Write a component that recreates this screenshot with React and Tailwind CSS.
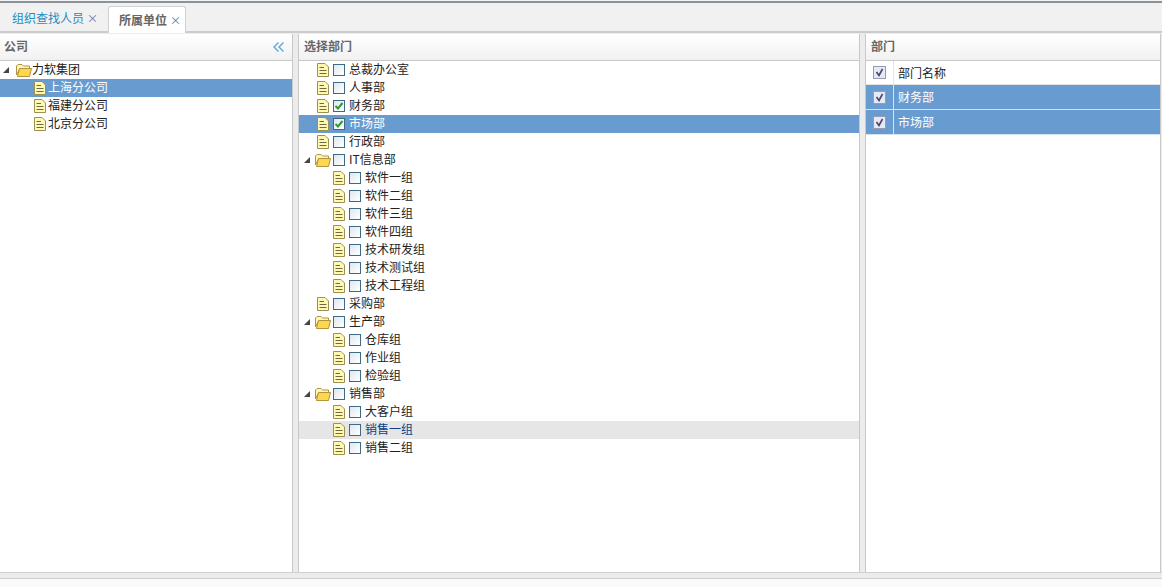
const companies = [
  { name: "力软集团", folder: true, level: 0 },
  { name: "上海分公司", level: 1, selected: true },
  { name: "福建分公司", level: 1 },
  { name: "北京分公司", level: 1 },
];

const departments = [
  { name: "总裁办公室", level: 0 },
  { name: "人事部", level: 0 },
  { name: "财务部", level: 0, checked: true },
  { name: "市场部", level: 0, checked: true, selected: true },
  { name: "行政部", level: 0 },
  { name: "IT信息部", level: 0, folder: true },
  { name: "软件一组", level: 1 },
  { name: "软件二组", level: 1 },
  { name: "软件三组", level: 1 },
  { name: "软件四组", level: 1 },
  { name: "技术研发组", level: 1 },
  { name: "技术测试组", level: 1 },
  { name: "技术工程组", level: 1 },
  { name: "采购部", level: 0 },
  { name: "生产部", level: 0, folder: true },
  { name: "仓库组", level: 1 },
  { name: "作业组", level: 1 },
  { name: "检验组", level: 1 },
  { name: "销售部", level: 0, folder: true },
  { name: "大客户组", level: 1 },
  { name: "销售一组", level: 1, hover: true },
  { name: "销售二组", level: 1 },
];

function FileIcon() {
  return (
    <svg width="12" height="14" viewBox="0 0 12 14" className="shrink-0">
      <path d="M0.5 0.5H8L11.5 4V13.5H0.5Z" fill="#fff9b5" stroke="#9c9050" />
      <path d="M2.5 4.5H7M2.5 7.5H9.5M2.5 10.5H9.5" stroke="#6f6a44" />
    </svg>
  );
}

function FolderIcon() {
  return (
    <svg width="16" height="13" viewBox="0 0 16 13" className="shrink-0">
      <path d="M0.5 11V2L2 0.5H6L7.5 2H13.5V5H3.5L0.5 11Z" fill="#fff6b8" stroke="#b09440" />
      <path d="M1.5 12.5L3.5 4.5H15.5L13.5 12.5Z" fill="#fdd84f" stroke="#b09440" />
    </svg>
  );
}

function Arrow() {
  return (
    <svg width="6" height="6" viewBox="0 0 6 6" className="shrink-0">
      <path d="M6 0V6H0Z" fill="#444" />
    </svg>
  );
}

function TreeCheck({ checked }) {
  return (
    <span className="w-3 h-3 shrink-0 border border-[#3f6a86] bg-gradient-to-br from-[#dfe8ee] to-white flex items-center justify-center">
      {checked && (
        <svg width="10" height="10" viewBox="0 0 10 10">
          <path d="M1.5 5L4 7.5L8.5 2" fill="none" stroke="#2f9a35" strokeWidth="2" />
        </svg>
      )}
    </span>
  );
}

function GridCheck() {
  return (
    <span className="w-[13px] h-[13px] border border-[#9a9ab0] bg-[#e8e8f2] flex items-center justify-center">
      <svg width="11" height="11" viewBox="0 0 11 11">
        <path d="M2.5 5L5 8.5L8.5 2" fill="none" stroke="#45457a" strokeWidth="1.6" />
      </svg>
    </span>
  );
}

function TreeRow({ node, hasCheck, baseIndent }) {
  let rowClass = "text-[#222]";
  if (node.selected) rowClass = "bg-[#689bcf] text-white";
  if (node.hover) rowClass = "bg-[#e6e6e6] text-[#0b3f8a]";
  const indent = baseIndent + node.level * 16;
  return (
    <div className={`h-[18px] flex items-center ${rowClass}`}>
      <div style={{ width: indent }} className="shrink-0" />
      {node.folder ? (
        <div className={`flex items-center shrink-0 ml-[-13px] ${hasCheck ? "w-[27px]" : "w-[29px]"}`}>
          <Arrow />
          <span className={hasCheck ? "ml-[5px]" : "ml-[7px]"}>
            <FolderIcon />
          </span>
        </div>
      ) : (
        <div className="w-[14px] shrink-0">
          <FileIcon />
        </div>
      )}
      {hasCheck && (
        <span className="ml-[2px] mr-1">
          <TreeCheck checked={node.checked} />
        </span>
      )}
      <span className="leading-4 mb-[2px]">{node.name}</span>
    </div>
  );
}

function PanelHeader({ title, bordered, children }) {
  return (
    <div
      className={`h-[27px] shrink-0 pr-1 flex items-center justify-between border-b border-[#c8c8c8] bg-gradient-to-b from-white to-[#f1f1f1] ${
        bordered ? "pl-[5px]" : "pl-1"
      }`}
    >
      <span className="font-bold text-[#666] leading-4 mb-[2px]">{title}</span>
      {children}
    </div>
  );
}

export default function App() {
  return (
    <div
      className="w-[1162px] h-[587px] overflow-hidden flex flex-col bg-[#ececec] text-xs"
      style={{ fontFamily: '"Noto Sans CJK SC", "Liberation Sans", sans-serif' }}
    >
      <div className="h-[3px] shrink-0 bg-[#f4f4f4] border-b-2 border-b-[#8a939c]" />
      <div className="h-[30px] shrink-0 flex items-end pl-1 bg-[#f1f1f1] border-b-2 border-[#cccccc]">
        <div className="h-[26px] w-[104px] flex items-center pl-2 gap-[3px] text-[#1e8bc0]">
          <span>组织查找人员</span>
          <span className="text-[#5577aa] text-[11px]">×</span>
        </div>
        <div className="h-[27px] w-[78px] mb-[-2px] flex items-center pl-[10px] gap-[3px] bg-white border border-b-0 border-[#d2d2d2] rounded-t-[3px] text-[#666] font-bold">
          <span>所属单位</span>
          <span className="text-[#5577aa] text-[11px] font-normal">×</span>
        </div>
      </div>

      <div className="h-[539px] shrink-0 flex pt-px">
        <section className="w-[293px] shrink-0 bg-white flex flex-col border-r border-[#c8c8c8]">
          <PanelHeader title="公司">
            <svg width="12" height="12" viewBox="0 0 12 12" className="mr-[3px]">
              <path d="M5.5 1.5L1 6L5.5 10.5M10.5 1.5L6 6L10.5 10.5" fill="none" stroke="#5aa7dc" strokeWidth="1.4" />
            </svg>
          </PanelHeader>
          <div>
            {companies.map((node) => (
              <TreeRow key={node.name} node={node} baseIndent={node.level === 0 ? 16 : 18} />
            ))}
          </div>
        </section>

        <div className="w-[5px] shrink-0" />

        <section className="w-[562px] shrink-0 bg-white flex flex-col border-x border-[#c8c8c8]">
          <PanelHeader title="选择部门" bordered />
          <div>
            {departments.map((node) => (
              <TreeRow key={node.name} node={node} hasCheck baseIndent={18} />
            ))}
          </div>
        </section>

        <div className="w-[5px] shrink-0" />

        <section className="flex-1 mr-px bg-white flex flex-col border-x border-[#c8c8c8]">
          <PanelHeader title="部门" bordered />
          <div className="h-6 flex items-center border-b border-[#e4e4e4]">
            <div className="w-7 h-full shrink-0 flex items-center justify-center border-r border-[#e4e4e4]">
              <GridCheck />
            </div>
            <span className="pl-1 text-[#222]">部门名称</span>
          </div>
          {["财务部", "市场部"].map((name) => (
            <div key={name} className="h-[25px] flex items-center bg-[#689bcf] border-b border-[#d5e3f1] text-white">
              <div className="w-7 h-full shrink-0 flex items-center justify-center border-r border-[#d5e3f1]">
                <GridCheck />
              </div>
              <span className="pl-1">{name}</span>
            </div>
          ))}
        </section>
      </div>

      <div className="h-[6px] shrink-0 border-t border-[#cfcfcf]" />
      <div className="flex-1 bg-[#fafafa] border-t border-[#cfcfcf]" />
    </div>
  );
}
